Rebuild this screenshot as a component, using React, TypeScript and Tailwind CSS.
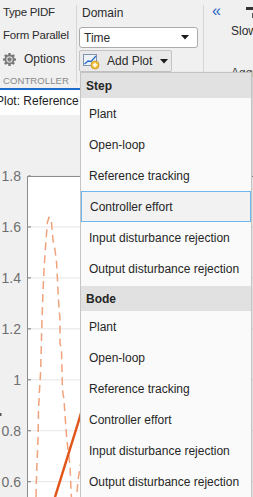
const stepItems = [
  "Plant",
  "Open-loop",
  "Reference tracking",
  "Controller effort",
  "Input disturbance rejection",
  "Output disturbance rejection",
];

const ticks = [1.8, 1.6, 1.4, 1.2, 1, 0.8, 0.6];
const yOf = (v: number) => 61 + (1.8 - v) * 254.75;

const Caret = () => (
  <svg width="8" height="5" viewBox="0 0 8 5">
    <polygon points="0,0 8,0 4,4.5" fill="#1a1a1a" />
  </svg>
);

const GearIcon = () => (
  <svg width="13" height="13" viewBox="0 0 13 13">
    <g fill="#7a7a7a">
      {[0, 45, 90, 135].map((a) => (
        <rect key={a} x="5.25" y="0" width="2.5" height="13" rx="0.6" transform={`rotate(${a} 6.5 6.5)`} />
      ))}
      <circle cx="6.5" cy="6.5" r="4.9" />
    </g>
    <circle cx="6.5" cy="6.5" r="3.2" fill="#d6d6d6" />
    <circle cx="6.5" cy="6.5" r="2" fill="#7a7a7a" />
  </svg>
);

const AddPlotIcon = () => (
  <svg width="18" height="17" viewBox="0 0 18 17">
    <rect x="1.5" y="1.5" width="13" height="11" fill="#eef3fa" stroke="#8193ad" />
    <polyline points="2.5,11 6,8 9,8.5 14,3" fill="none" stroke="#2f6fc6" strokeWidth="1.3" />
    <circle cx="13" cy="12" r="4" fill="#f2c23c" stroke="#c8921a" strokeWidth="0.8" />
    <path d="M13 9.8v4.4M10.8 12h4.4" stroke="#ffffff" strokeWidth="1.4" />
  </svg>
);

function MenuItem({ label, active }: { label: string; active?: boolean }) {
  return (
    <div
      className={`h-[31px] flex items-center pl-[8px] text-[#262626] ${
        active ? "border border-[#6db6ef] bg-[#f2f2f2] pl-[7px]" : ""
      }`}
    >
      {label}
    </div>
  );
}

function MenuSection({ title, activeIndex }: { title: string; activeIndex?: number }) {
  return (
    <div className="flex flex-col">
      <div className="h-[25px] flex items-center pl-[5px] bg-[#e1e1e1] font-bold text-[#262626]">{title}</div>
      {stepItems.map((item, i) => (
        <MenuItem key={item} label={item} active={i === activeIndex} />
      ))}
    </div>
  );
}

function Figure() {
  return (
    <svg width="253" height="382" viewBox="0 0 253 382" className="block">
      <rect x="27" y="61" width="226" height="321" fill="#ffffff" />
      {ticks.map((t) => (
        <g key={t}>
          <line x1="28" x2="253" y1={yOf(t)} y2={yOf(t)} stroke="#e6e6e6" strokeWidth="1" />
          <line x1="28" x2="31" y1={yOf(t)} y2={yOf(t)} stroke="#7a7a7a" strokeWidth="1" />
          <text
            x="21"
            y={yOf(t)}
            textAnchor="end"
            dominantBaseline="central"
            fontSize="14"
            fill="#6e6e6e"
            fontFamily="Liberation Sans, Arial, sans-serif"
          >
            {t === 1 ? "1" : t.toFixed(1)}
          </text>
        </g>
      ))}
      <line x1="27.5" x2="27.5" y1="61" y2="382" stroke="#8c8c8c" />
      <line x1="27" x2="253" y1="61.5" y2="61.5" stroke="#8c8c8c" />
      <rect x="0" y="298" width="1.5" height="3" fill="#555555" />
      <path
        d="M36,382 L36.7,355 L38,325 L38.5,295 L39.5,275 L40.7,255 L41.7,215 L42.7,185 L43.5,165 L44.5,147 L46,125 L47.5,107 L49,102.5 L51,103 L52,113 L53,125 L55,135 L56.5,147 L57.5,165 L58.5,185 L60,205 L60,228 L61.5,235 L62.5,275 L64,285 L65,300 L66.5,320 L68,335 L70,350 L71,375 L72,390"
        fill="none"
        stroke="#f0a27c"
        strokeWidth="1.5"
        strokeDasharray="8 5"
      />
      <path d="M76,390 L78,365 L82,340 L90,300" fill="none" stroke="#f0a27c" strokeWidth="1.5" strokeDasharray="8 5" />
      <path d="M55,382 L79,305 L95,250" fill="none" stroke="#e0561b" strokeWidth="2.5" />
    </svg>
  );
}

export default function App() {
  return (
    <div className="relative w-[253px] h-[497px] overflow-hidden bg-[#f0f0f0] font-['Liberation_Sans',Arial,sans-serif] text-[12px] text-[#2b2b2b]">
      {/* toolstrip */}
      <div className="flex h-[88px]">
        <div className="w-[76px] flex flex-col pt-[3px] pl-[3px] gap-[4px]">
          <div className="h-[20px] flex items-center whitespace-nowrap text-[11.5px] tracking-[-0.3px]">Type PIDF</div>
          <div className="h-[20px] flex items-center whitespace-nowrap text-[11.5px] tracking-[-0.2px]">Form Parallel</div>
          <div className="h-[20px] flex items-center gap-[8px]">
            <GearIcon />
            <span>Options</span>
          </div>
          <div className="h-[14px] mt-[1px] flex items-center text-[9.5px] text-[#8a8a8a] tracking-[0.1px]">CONTROLLER</div>
        </div>
        <div className="w-px bg-[#d6d6d6] my-[5px]" />
        <div className="w-[126px] flex flex-col pl-[2px] pt-[3px]">
          <div className="h-[20px] flex items-center pl-[3px]">Domain</div>
          <div className="mt-[4px] w-[119px] h-[21px] flex items-center justify-between bg-white border border-[#ababab] rounded-[3px] pl-[4px] pr-[8px]">
            <span>Time</span>
            <Caret />
          </div>
          <div className="mt-[2px] w-[93px] h-[22px] flex items-center bg-[#e9e9e9] border border-[#c3c3c3] rounded-[2px] pl-[2px]">
            <AddPlotIcon />
            <span className="ml-[7px]">Add Plot</span>
            <span className="ml-[8px] flex">
              <Caret />
            </span>
          </div>
        </div>
        <div className="w-px bg-[#d6d6d6] my-[5px]" />
        <div className="flex-1 flex flex-col pt-[4px] pl-[8px] whitespace-nowrap overflow-hidden">
          <div className="h-[14px] flex items-start justify-between">
            <span className="text-[16px] leading-[14px] text-[#2a68c6]">«</span>
            <span className="mt-[3px] w-[7px] h-[3px] bg-[#333333]" />
          </div>
          <div className="flex items-start">
            <span className="ml-[19px] mt-[4px]">Slow</span>
            <span className="ml-[-5px] mt-[-5px] w-px h-[5px] bg-[#555555]" />
          </div>
          <div className="ml-[19px] mt-[24px] text-[#444444]">Aggressive</div>
        </div>
      </div>
      {/* document tab */}
      <div className="h-[2px] w-[140px] bg-[#1f6ccc]" />
      <div className="h-[25px] flex">
        <div className="w-[140px] bg-white flex items-center">
          <span className="-ml-[4px] -mt-[4px] whitespace-nowrap text-[#222222]">Plot: Reference tracking</span>
        </div>
      </div>
      <Figure />

      {/* Add Plot menu */}
      <div className="absolute left-[80px] top-[72px] w-[172px] h-[440px] bg-[#fafafa] border-l border-t border-r border-[#c4c4c4] shadow-[1px_0_1px_rgba(0,0,0,0.12)]">
        <MenuSection title="Step" activeIndex={3} />
        <div className="h-[2px]" />
        <MenuSection title="Bode" />
      </div>
    </div>
  );
}
